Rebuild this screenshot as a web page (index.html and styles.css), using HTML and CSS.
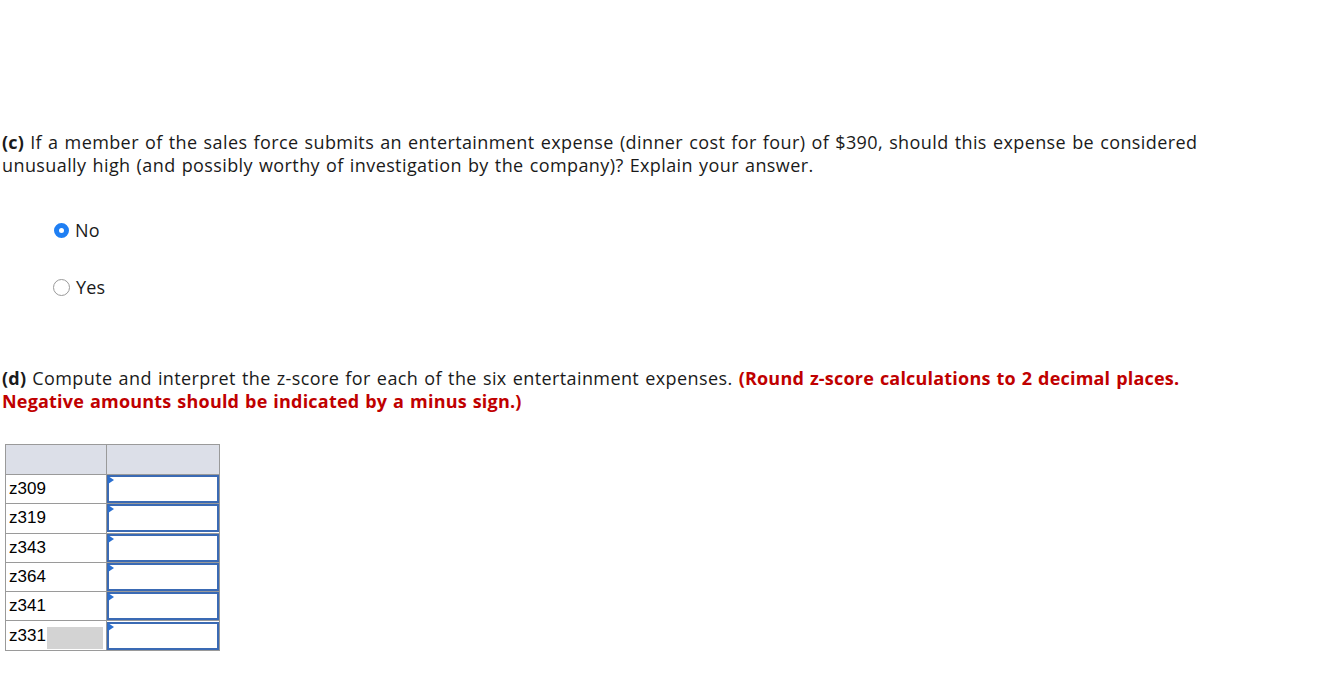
FILE: index.html
```html
<!DOCTYPE html>
<html>
<head>
<meta charset="utf-8">
<link rel="stylesheet" href="styles.css">
</head>
<body>
<div class="page">
  <p class="q q-c"><b>(c)</b> If a member of the sales force submits an entertainment expense (dinner cost for four) of $390, should this expense be considered<br>unusually high (and possibly worthy of investigation by the company)? Explain your answer.</p>
  <div class="options">
    <label class="opt"><span class="radio checked"></span>No</label>
    <label class="opt"><span class="radio"></span>Yes</label>
  </div>
  <p class="q q-d"><b>(d)</b> Compute and interpret the z-score for each of the six entertainment expenses. <b class="red">(Round z-score calculations to 2 decimal places.<br>Negative amounts should be indicated by a minus sign.)</b></p>
  <table class="grid">
    <tr class="head"><th class="c1"></th><th class="c2"></th></tr>
    <tr><td class="lbl">z309</td><td class="inp"><div class="box"><span class="tri"></span></div></td></tr>
    <tr><td class="lbl">z319</td><td class="inp"><div class="box"><span class="tri"></span></div></td></tr>
    <tr><td class="lbl">z343</td><td class="inp"><div class="box"><span class="tri"></span></div></td></tr>
    <tr><td class="lbl">z364</td><td class="inp"><div class="box"><span class="tri"></span></div></td></tr>
    <tr><td class="lbl">z341</td><td class="inp"><div class="box"><span class="tri"></span></div></td></tr>
    <tr><td class="lbl"><span class="lastlbl">z331<span class="shade"></span></span></td><td class="inp"><div class="box"><span class="tri"></span></div></td></tr>
  </table>
</div>
</body>
</html>
```
FILE: styles.css
```css
html, body {
  margin: 0;
  padding: 0;
  background: #fff;
}
.page {
  padding: 131px 0 0 2px;
  font-family: "Open Sans", "Lato", sans-serif;
  font-size: 18px;
  color: #1a1a1a;
}
.q {
  margin: 0;
  line-height: 23px;
  white-space: nowrap;
  letter-spacing: 0.4px;
  word-spacing: 1px;
}
.q b {
  font-weight: 700;
  letter-spacing: 0.2px;
}
.red {
  color: #c00000;
}
.options {
  display: flex;
  flex-direction: column;
  gap: 35px;
  padding: 42px 0 0 51px;
}
.opt {
  display: flex;
  align-items: center;
  gap: 6px;
  height: 22px;
  font-size: 18px;
  letter-spacing: 0.2px;
}
.radio {
  width: 15px;
  height: 15px;
  border-radius: 50%;
  border: 1px solid #9a9a9a;
  background: #fff;
}
.radio.checked {
  width: 5px;
  height: 5px;
  border: 5.5px solid #1f7ff3;
  background: #fff;
  margin-left: 1px;
}
.q-d {
  margin-top: 69px;
}
.grid {
  margin: 31px 0 0 3px;
  border-collapse: collapse;
  border: 1px solid #8a8a8a;
  font-family: "Liberation Sans", Arial, sans-serif;
  font-size: 17px;
  color: #000;
}
.grid th, .grid td {
  border: 1px solid #9a9a9a;
  padding: 0;
}
.head th {
  height: 29px;
  background: #dcdfe8;
}
.c1 { width: 100px; }
.c2 { width: 112px; }
.grid td {
  height: 28.3px;
}
.lbl {
  padding-left: 3px !important;
  vertical-align: middle;
}
.lastlbl {
  display: flex;
  align-items: center;
}
.shade {
  display: inline-block;
  width: 56px;
  height: 22px;
  background: #d3d3d3;
  margin-top: 5px;
  margin-left: 1px;
}
.inp {
  padding: 0 !important;
}
.box {
  position: relative;
  height: 24px;
  border: 2px solid #3a6ab4;
  background: #fff;
}
.tri {
  position: absolute;
  left: -1px;
  top: -1px;
  width: 0;
  height: 0;
  border-top: 4px solid transparent;
  border-bottom: 4px solid transparent;
  border-left: 6px solid #2a6fd0;
}
```
